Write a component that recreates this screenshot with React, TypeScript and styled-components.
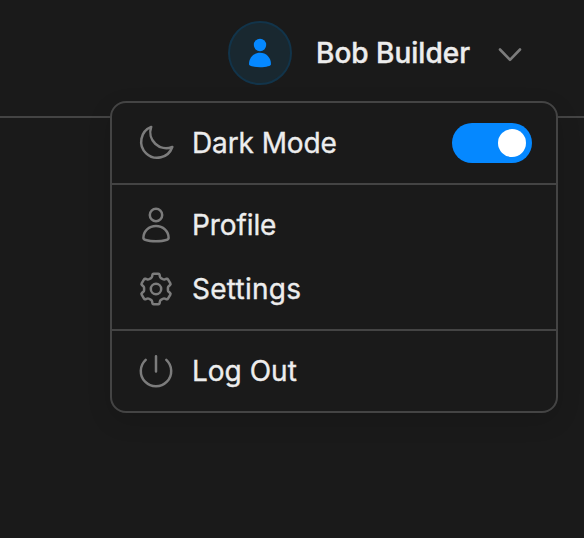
import React from "react";
import styled, { createGlobalStyle } from "styled-components";

const GlobalStyle = createGlobalStyle`
  *, *::before, *::after { box-sizing: border-box; }
  body {
    margin: 0;
    background: #1a1a1a;
    color: #ededed;
    font-family: Inter, sans-serif;
    overflow: hidden;
    -webkit-font-smoothing: antialiased;
  }
`;

const Page = styled.div`
  height: 538px;
`;

const Header = styled.header`
  position: relative;
  display: flex;
  justify-content: flex-end;
  height: 118px;
  padding: 21px 60px 0 0;
  border-bottom: 2px solid #444;
`;

const UserButton = styled.button`
  display: flex;
  align-items: center;
  height: 64px;
  padding: 0;
  border: 0;
  background: none;
  color: inherit;
  font: inherit;
`;

const Avatar = styled.span`
  display: flex;
  align-items: center;
  justify-content: center;
  width: 64px;
  height: 64px;
  margin-right: 24px;
  border: 2px solid #12344a;
  border-radius: 50%;
  background: #192830;
  color: #0588ff;
`;

const UserName = styled.span`
  width: 180px;
  text-align: left;
  font-size: 28px;
  font-weight: 500;
  line-height: 40px;
  white-space: nowrap;
  -webkit-text-stroke: 0.4px currentColor;
`;

const Chevron = styled.svg`
  width: 28px;
  height: 28px;
  margin: 4px 0 0;
  color: #7c7c7c;
`;

const Menu = styled.div`
  position: absolute;
  top: 101px;
  right: 26px;
  width: 448px;
  border: 2px solid #444;
  border-radius: 16px;
  background: #1a1a1a;
  box-shadow: 0 8px 24px rgba(0, 0, 0, 0.12);
`;

const Section = styled.div`
  padding: 8px 0;
  & + & {
    border-top: 2px solid #444;
  }
`;

const Item = styled.div`
  display: flex;
  align-items: center;
  height: 64px;
  padding: 0 24px;
`;

const Icon = styled.svg`
  flex: none;
  width: 40px;
  height: 40px;
  margin-right: 16px;
  fill: none;
  stroke: #7c7c7c;
  stroke-width: 2.5;
  stroke-linecap: round;
  stroke-linejoin: round;
`;

const Label = styled.span<{ $tracking?: number }>`
  flex: 1;
  font-size: 28px;
  line-height: 40px;
  letter-spacing: ${(p) => p.$tracking ?? 0}px;
  white-space: nowrap;
  -webkit-text-stroke: 0.35px currentColor;
`;

const Switch = styled.span<{ $on: boolean }>`
  display: flex;
  align-items: center;
  justify-content: ${(p) => (p.$on ? "flex-end" : "flex-start")};
  width: 80px;
  height: 40px;
  padding: 6px;
  border-radius: 20px;
  background: ${(p) => (p.$on ? "#0588ff" : "#444")};
`;

const Knob = styled.span`
  width: 28px;
  height: 28px;
  border-radius: 50%;
  background: #fff;
`;

// Six-tooth gear outline around (20, 20) with softened corners.
const gearPath = (() => {
  const tooth = [
    [-4.1, -11.4],
    [-3.4, -15.2],
    [3.4, -15.2],
    [4.1, -11.4],
  ];
  const pts: number[][] = [];
  for (let i = 0; i < 6; i++) {
    const a = (i * Math.PI) / 3;
    for (const [x, y] of tooth) {
      pts.push([
        20 + x * Math.cos(a) - y * Math.sin(a),
        20 + x * Math.sin(a) + y * Math.cos(a),
      ]);
    }
  }
  const toward = (p: number[], q: number[], max: number) => {
    const len = Math.hypot(q[0] - p[0], q[1] - p[1]);
    const t = Math.min(max, len / 2) / len;
    return `${(p[0] + (q[0] - p[0]) * t).toFixed(2)} ${(p[1] + (q[1] - p[1]) * t).toFixed(2)}`;
  };
  return (
    pts
      .map((p, i) => {
        const prev = pts[(i + pts.length - 1) % pts.length];
        const next = pts[(i + 1) % pts.length];
        return `${i ? "L" : "M"}${toward(p, prev, 1)}Q${p[0].toFixed(2)} ${p[1].toFixed(2)} ${toward(p, next, 1)}`;
      })
      .join("") + "Z"
  );
})();

export default function App() {
  return (
    <Page>
      <GlobalStyle />
      <Header>
        <UserButton>
          <Avatar>
            <svg width="40" height="40" viewBox="0 0 40 40" fill="currentColor">
              <circle cx="20" cy="12" r="6.2" />
              <path d="M9 31.2C9 24.6 13.8 19.8 20 19.8S31 24.6 31 31.2C31 32.8 26.5 34.2 20 34.2S9 32.8 9 31.2Z" />
            </svg>
          </Avatar>
          <UserName>Bob Builder</UserName>
          <Chevron viewBox="0 0 28 28" fill="none" stroke="currentColor" strokeWidth="2.6" strokeLinecap="round" strokeLinejoin="round">
            <path d="M4 8.5 14 18.8 24 8.5" />
          </Chevron>
        </UserButton>
        <Menu>
          <Section>
            <Item>
              <Icon viewBox="0 0 40 40">
                <path d="M15.2 3.9A16 16 0 1 0 36.3 24A16 16 0 0 1 15.2 3.9Z" />
              </Icon>
              <Label $tracking={-0.1}>Dark Mode</Label>
              <Switch $on>
                <Knob />
              </Switch>
            </Item>
          </Section>
          <Section>
            <Item>
              <Icon viewBox="0 0 40 40">
                <circle cx="20" cy="10" r="6.2" />
                <path d="M7.4 33C7.4 26 13 21 20 21S32.6 26 32.6 33C32.6 34.8 28 36.2 20 36.2S7.4 34.8 7.4 33Z" />
              </Icon>
              <Label $tracking={-0.1}>Profile</Label>
            </Item>
            <Item>
              <Icon viewBox="0 0 40 40">
                <path d={gearPath} />
                <circle cx="20" cy="20" r="5.2" />
              </Icon>
              <Label $tracking={0.25}>Settings</Label>
            </Item>
          </Section>
          <Section>
            <Item>
              <Icon viewBox="0 0 40 40">
                <path d="M9.7 8.9A15.2 15.2 0 1 0 30.3 8.9M20 5.2V20.4" />
              </Icon>
              <Label>Log Out</Label>
            </Item>
          </Section>
        </Menu>
      </Header>
    </Page>
  );
}
